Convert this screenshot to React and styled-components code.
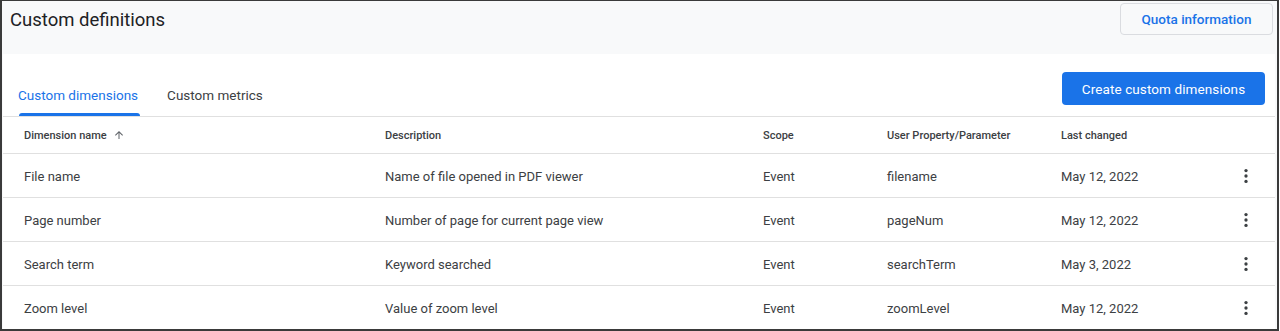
import React from "react";
import styled, { createGlobalStyle } from "styled-components";

const GlobalStyle = createGlobalStyle`
  html, body {
    margin: 0;
    padding: 0;
    background: #ffffff;
  }
  body {
    font-family: Roboto, "Liberation Sans", Arial, sans-serif;
    color: #3c4043;
  }
`;

const Frame = styled.div`
  box-sizing: border-box;
  width: 1279px;
  height: 331px;
  border: 2px solid #3a3a3a;
  border-top-width: 1px;
  background: #f8f9fa;
  display: flex;
  flex-direction: column;
  overflow: hidden;
`;

const Header = styled.div`
  height: 55px;
  display: flex;
  align-items: flex-start;
  justify-content: space-between;
  padding: 0 4px 0 8px;
`;

const Title = styled.h1`
  margin: 8px 0 0;
  font-family: Roboto, sans-serif;
  font-size: 18.5px;
  font-weight: 400;
  color: #202124;
`;

const OutlineButton = styled.button`
  margin-top: 2px;
  height: 32px;
  width: 153px;
  border: 1px solid #dadce0;
  border-radius: 4px;
  background: #f8f9fa;
  color: #1a73e8;
  font-family: Roboto, sans-serif;
  font-size: 13.5px;
  font-weight: 500;
`;

const Card = styled.div`
  flex: 1;
  margin: 0 2px 0 1px;
  background: #ffffff;
  display: flex;
  flex-direction: column;
`;

const Toolbar = styled.div`
  height: 62px;
  display: flex;
  align-items: flex-end;
  justify-content: space-between;
  border-bottom: 1px solid #e0e0e0;
  padding: 0 10px 0 13px;
`;

const Tabs = styled.div`
  display: flex;
`;

const Tab = styled.div`
  position: relative;
  padding: 0 2px 13px;
  margin-right: 25px;
  font-size: 13.5px;
  font-weight: 400;
  color: ${(p) => (p.active ? "#1a73e8" : "#3c4043")};

  &::after {
    content: "";
    display: ${(p) => (p.active ? "block" : "none")};
    position: absolute;
    left: 3px;
    right: 0;
    bottom: 0;
    height: 3px;
    border-radius: 3px 3px 0 0;
    background: #1a73e8;
  }
`;

const PrimaryButton = styled.button`
  align-self: flex-start;
  margin-top: 18px;
  height: 33px;
  width: 203px;
  border: none;
  border-radius: 4px;
  background: #1a73e8;
  color: #ffffff;
  font-family: Roboto, sans-serif;
  font-size: 13.5px;
  font-weight: 400;
  letter-spacing: 0.1px;
`;

const Table = styled.div`
  display: flex;
  flex-direction: column;
`;

const Row = styled.div`
  display: grid;
  grid-template-columns: 361px 378px 124px 174px 1fr 40px;
  align-items: center;
  height: ${(p) => (p.head ? 36 : 43)}px;
  padding: 0 9px 0 21px;
  border-bottom: 1px solid #e0e0e0;

  &:last-child {
    border-bottom: none;
  }
`;

const HeadCell = styled.div`
  font-size: 11px;
  font-weight: 500;
  color: #3c4043;
  display: flex;
  align-items: center;
  gap: 6px;
`;

const Cell = styled.div`
  font-size: 13px;
  color: #3c4043;
  white-space: nowrap;
  padding-top: 1px;
`;

const Kebab = styled.div`
  display: flex;
  justify-content: center;
`;

const SortArrow = () => (
  <svg width="12" height="12" viewBox="0 0 24 24" fill="#5f6368">
    <path d="M4 12l1.41 1.41L11 7.83V20h2V7.83l5.58 5.59L20 12l-8-8-8 8z" />
  </svg>
);

const MoreIcon = () => (
  <svg width="20" height="20" viewBox="0 0 24 24" fill="#3c4043">
    <circle cx="12" cy="5.5" r="2" />
    <circle cx="12" cy="12" r="2" />
    <circle cx="12" cy="18.5" r="2" />
  </svg>
);

const rows = [
  ["File name", "Name of file opened in PDF viewer", "Event", "filename", "May 12, 2022"],
  ["Page number", "Number of page for current page view", "Event", "pageNum", "May 12, 2022"],
  ["Search term", "Keyword searched", "Event", "searchTerm", "May 3, 2022"],
  ["Zoom level", "Value of zoom level", "Event", "zoomLevel", "May 12, 2022"],
];

export default function App() {
  return (
    <>
      <GlobalStyle />
      <Frame>
        <Header>
          <Title>Custom definitions</Title>
          <OutlineButton>Quota information</OutlineButton>
        </Header>
        <Card>
          <Toolbar>
            <Tabs>
              <Tab active>Custom dimensions</Tab>
              <Tab>Custom metrics</Tab>
            </Tabs>
            <PrimaryButton>Create custom dimensions</PrimaryButton>
          </Toolbar>
          <Table>
            <Row head>
              <HeadCell>
                Dimension name <SortArrow />
              </HeadCell>
              <HeadCell>Description</HeadCell>
              <HeadCell>Scope</HeadCell>
              <HeadCell>User Property/Parameter</HeadCell>
              <HeadCell>Last changed</HeadCell>
              <span />
            </Row>
            {rows.map((r) => (
              <Row key={r[0]}>
                {r.map((c, i) => (
                  <Cell key={i}>{c}</Cell>
                ))}
                <Kebab>
                  <MoreIcon />
                </Kebab>
              </Row>
            ))}
          </Table>
        </Card>
      </Frame>
    </>
  );
}
